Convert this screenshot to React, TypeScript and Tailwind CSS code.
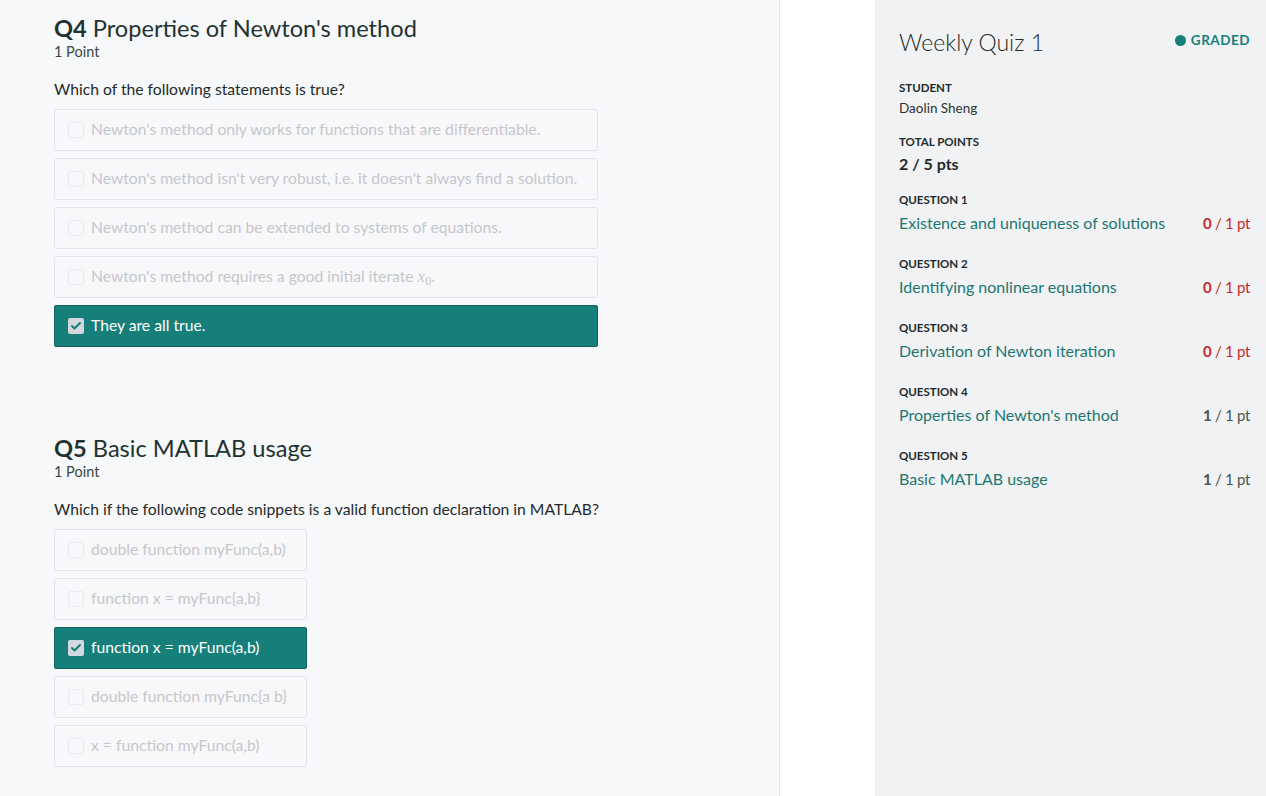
import { Check } from "lucide-react";
import type { ReactNode } from "react";

type Option = { label: ReactNode; checked?: boolean };

const q4Options: Option[] = [
  { label: "Newton's method only works for functions that are differentiable." },
  { label: "Newton's method isn't very robust, i.e. it doesn't always find a solution." },
  { label: "Newton's method can be extended to systems of equations." },
  {
    label: (
      <>
        Newton's method requires a good initial iterate{" "}
        <span className="font-['Liberation_Serif',serif] italic text-[17px]">x</span>
        <sub className="font-['Liberation_Serif',serif] text-[12px]">0</sub>.
      </>
    ),
  },
  { label: "They are all true.", checked: true },
];

const q5Options: Option[] = [
  { label: "double function myFunc(a,b)" },
  { label: "function x = myFunc{a,b}" },
  { label: "function x = myFunc(a,b)", checked: true },
  { label: "double function myFunc{a b}" },
  { label: "x = function myFunc(a,b)" },
];

const summary = [
  { n: 1, title: "Existence and uniqueness of solutions", score: 0 },
  { n: 2, title: "Identifying nonlinear equations", score: 0 },
  { n: 3, title: "Derivation of Newton iteration", score: 0 },
  { n: 4, title: "Properties of Newton's method", score: 1 },
  { n: 5, title: "Basic MATLAB usage", score: 1 },
];

const OptionRow = ({ option, width }: { option: Option; width: string }) => {
  if (option.checked) {
    return (
      <div className={`${width} h-[42px] flex items-center gap-[7px] pl-[13px] rounded-[2px] border border-[#11625d] bg-[#177f79] text-white text-[15.7px]`}>
        <span className="w-[16px] h-[16px] rounded-[2px] bg-[#d3d8de] flex items-center justify-center">
          <Check className="w-[12px] h-[12px] text-[#177f79]" strokeWidth={4} />
        </span>
        <span>{option.label}</span>
      </div>
    );
  }
  return (
    <div className={`${width} h-[42px] flex items-center gap-[7px] pl-[13px] rounded-[3px] border border-[#e3e3ea] bg-[#f8f8fa] text-[#c5c7cb] text-[15.7px]`}>
      <span className="w-[16px] h-[16px] rounded-[2px] border border-[#ececf0] bg-[#f8f8fa]" />
      <span>{option.label}</span>
    </div>
  );
};

const Question = ({ num, title, prompt, options, width }: { num: number; title: string; prompt: string; options: Option[]; width: string }) => (
  <section>
    <h2 className="text-[23.6px] leading-[26px] text-[#1f3330]">
      <span className="font-bold">Q{num}</span> {title}
    </h2>
    <div className="text-[14.5px] leading-[18px] text-[#3d4745] mt-[2px]">1 Point</div>
    <p className="text-[15.7px] leading-[20px] text-[#1f2b2a] mt-[18px]">{prompt}</p>
    <div className="flex flex-col gap-[7px] mt-[10px]">
      {options.map((o, i) => (
        <OptionRow key={i} option={o} width={width} />
      ))}
    </div>
  </section>
);

export default function App() {
  return (
    <div className="w-[1266px] h-[796px] flex bg-white font-['Lato',sans-serif] overflow-hidden">
      <main className="w-[780px] h-full bg-[#f7f8fa] border-r border-[#e4e4ea] pl-[54px] pt-[15px] flex flex-col gap-[88px]">
        <Question
          num={4}
          title="Properties of Newton's method"
          prompt="Which of the following statements is true?"
          options={q4Options}
          width="w-[544px]"
        />
        <Question
          num={5}
          title="Basic MATLAB usage"
          prompt="Which if the following code snippets is a valid function declaration in MATLAB?"
          options={q5Options}
          width="w-[253px]"
        />
      </main>
      <div className="w-[95px]" />
      <aside className="flex-1 h-full bg-[#f1f2f4] pl-[24px] pr-[16px] pt-[27px]">
        <div className="flex items-start justify-between">
          <h1 className="text-[23px] leading-[30px] font-light text-[#1f2b2a]">Weekly Quiz 1</h1>
          <div className="flex items-center gap-[5px] mt-[3px] text-[13.5px] font-bold tracking-[0.5px] text-[#177f79]">
            <span className="w-[11px] h-[11px] rounded-full bg-[#177f79]" />
            GRADED
          </div>
        </div>
        <div className="mt-[24px] text-[11.5px] leading-[14px] font-bold text-[#1f2b2a]">STUDENT</div>
        <div className="mt-[5px] text-[13.5px] leading-[16px] text-[#2a3432]">Daolin Sheng</div>
        <div className="mt-[19px] text-[11.5px] leading-[14px] font-bold text-[#1f2b2a]">TOTAL POINTS</div>
        <div className="mt-[5px] text-[16px] leading-[20px] font-bold text-[#1f2b2a]">2 / 5 pts</div>
        <div className="flex flex-col gap-[24px] mt-[19px]">
          {summary.map((q) => (
            <div key={q.n}>
              <div className="text-[11.5px] leading-[14px] font-bold text-[#1f2b2a]">QUESTION {q.n}</div>
              <div className="mt-[6px] flex items-center justify-between text-[16px] leading-[20px]">
                <span className="text-[#1d7770]">{q.title}</span>
                <span className={`text-[15px] tracking-[-0.3px] ${q.score === 0 ? "text-[#c42b2b]" : "text-[#4b5553]"}`}>
                  <span className="font-bold">{q.score}</span> / 1 pt
                </span>
              </div>
            </div>
          ))}
        </div>
      </aside>
    </div>
  );
}
